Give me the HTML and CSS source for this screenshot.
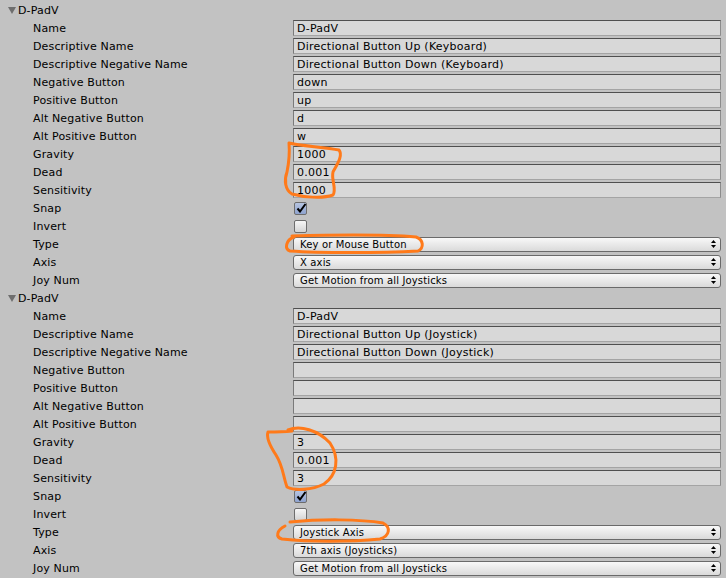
FILE: index.html
```html
<!DOCTYPE html>
<html>
<head>
<meta charset="utf-8">
<link rel="stylesheet" href="styles.css">
</head>
<body>
<div class="panel">
  <div class="header"><svg class="tri" width="8" height="7" viewBox="0 0 8 7"><polygon points="0,0 8,0 4,7" fill="#6e6e6e"/></svg><span>D-PadV</span></div>
  <div class="row"><span class="label">Name</span><div class="field">D-PadV</div></div>
  <div class="row"><span class="label">Descriptive Name</span><div class="field">Directional Button Up (Keyboard)</div></div>
  <div class="row"><span class="label">Descriptive Negative Name</span><div class="field">Directional Button Down (Keyboard)</div></div>
  <div class="row"><span class="label">Negative Button</span><div class="field">down</div></div>
  <div class="row"><span class="label">Positive Button</span><div class="field">up</div></div>
  <div class="row"><span class="label">Alt Negative Button</span><div class="field">d</div></div>
  <div class="row"><span class="label">Alt Positive Button</span><div class="field">w</div></div>
  <div class="row"><span class="label">Gravity</span><div class="field">1000</div></div>
  <div class="row"><span class="label">Dead</span><div class="field">0.001</div></div>
  <div class="row"><span class="label">Sensitivity</span><div class="field">1000</div></div>
  <div class="row"><span class="label">Snap</span><div class="check on"><svg width="11" height="10" viewBox="0 0 11 10"><path d="M1.5 5.5 L4 8.5 L9.5 1" stroke="#000" stroke-width="2" fill="none"/></svg></div></div>
  <div class="row"><span class="label">Invert</span><div class="check"></div></div>
  <div class="row"><span class="label">Type</span><div class="popup"><span>Key or Mouse Button</span><svg class="arr" width="5" height="8" viewBox="0 0 5 8"><polygon points="2.5,0 5,3 0,3" fill="#000"/><polygon points="0,5 5,5 2.5,8" fill="#000"/></svg></div></div>
  <div class="row"><span class="label">Axis</span><div class="popup"><span>X axis</span><svg class="arr" width="5" height="8" viewBox="0 0 5 8"><polygon points="2.5,0 5,3 0,3" fill="#000"/><polygon points="0,5 5,5 2.5,8" fill="#000"/></svg></div></div>
  <div class="row"><span class="label">Joy Num</span><div class="popup"><span>Get Motion from all Joysticks</span><svg class="arr" width="5" height="8" viewBox="0 0 5 8"><polygon points="2.5,0 5,3 0,3" fill="#000"/><polygon points="0,5 5,5 2.5,8" fill="#000"/></svg></div></div>

  <div class="header"><svg class="tri" width="8" height="7" viewBox="0 0 8 7"><polygon points="0,0 8,0 4,7" fill="#6e6e6e"/></svg><span>D-PadV</span></div>
  <div class="row"><span class="label">Name</span><div class="field">D-PadV</div></div>
  <div class="row"><span class="label">Descriptive Name</span><div class="field">Directional Button Up (Joystick)</div></div>
  <div class="row"><span class="label">Descriptive Negative Name</span><div class="field">Directional Button Down (Joystick)</div></div>
  <div class="row"><span class="label">Negative Button</span><div class="field"></div></div>
  <div class="row"><span class="label">Positive Button</span><div class="field"></div></div>
  <div class="row"><span class="label">Alt Negative Button</span><div class="field"></div></div>
  <div class="row"><span class="label">Alt Positive Button</span><div class="field"></div></div>
  <div class="row"><span class="label">Gravity</span><div class="field">3</div></div>
  <div class="row"><span class="label">Dead</span><div class="field">0.001</div></div>
  <div class="row"><span class="label">Sensitivity</span><div class="field">3</div></div>
  <div class="row"><span class="label">Snap</span><div class="check on"><svg width="11" height="10" viewBox="0 0 11 10"><path d="M1.5 5.5 L4 8.5 L9.5 1" stroke="#000" stroke-width="2" fill="none"/></svg></div></div>
  <div class="row"><span class="label">Invert</span><div class="check"></div></div>
  <div class="row"><span class="label">Type</span><div class="popup"><span>Joystick Axis</span><svg class="arr" width="5" height="8" viewBox="0 0 5 8"><polygon points="2.5,0 5,3 0,3" fill="#000"/><polygon points="0,5 5,5 2.5,8" fill="#000"/></svg></div></div>
  <div class="row"><span class="label">Axis</span><div class="popup"><span>7th axis (Joysticks)</span><svg class="arr" width="5" height="8" viewBox="0 0 5 8"><polygon points="2.5,0 5,3 0,3" fill="#000"/><polygon points="0,5 5,5 2.5,8" fill="#000"/></svg></div></div>
  <div class="row"><span class="label">Joy Num</span><div class="popup"><span>Get Motion from all Joysticks</span><svg class="arr" width="5" height="8" viewBox="0 0 5 8"><polygon points="2.5,0 5,3 0,3" fill="#000"/><polygon points="0,5 5,5 2.5,8" fill="#000"/></svg></div></div>

  <svg class="marks" width="726" height="578" viewBox="0 0 726 578">
    <g fill="none" stroke="#ff7a1a" stroke-width="3" stroke-linecap="round" stroke-linejoin="round">
      <path d="M289 143 C300 146 325 147 339 150 C343 155 338 163 333 172 C331 180 337 189 333 195 C322 199 303 197 292 194 C285 190 284 180 287 172 C289 162 290 155 289 143"/>
      <path d="M292 236 C330 235 380 234 416 237 C424 240 424 248 418 251 C380 253 320 253 290 251 C284 249 286 240 294 237"/>
      <path d="M288 430 C300 425 318 430 330 443 C340 458 337 475 324 484 C312 490 295 491 287 487 C283 476 283 466 276 455 C270 446 266 438 268 432 C275 432 282 432 292 431"/>
      <path d="M290 522 C320 519 360 519 383 523 C391 527 390 536 380 539 C350 542 310 542 282 539 C275 537 277 530 285 526"/>
    </g>
  </svg>
</div>
</body>
</html>
```

FILE: styles.css
```css
html, body {
  margin: 0;
  padding: 0;
  background: #c2c2c2;
}
body {
  width: 726px;
  height: 578px;
  overflow: hidden;
  font-family: "DejaVu Sans", Verdana, sans-serif;
  font-size: 11px;
  letter-spacing: 0.15px;
  color: #000;
}
.panel {
  position: relative;
  padding-top: 1px;
}
.header {
  height: 18px;
  display: flex;
  align-items: center;
  padding-left: 8px;
}
.tri {
  margin-right: 2px;
  margin-top: 1px;
}
.row {
  height: 18px;
  display: grid;
  grid-template-columns: 293px 428px;
  align-items: center;
}
.label {
  padding-left: 33px;
  white-space: nowrap;
}
.field {
  height: 16px;
  box-sizing: border-box;
  background: #d8d8d8;
  border-top: 1px solid #4f4f4f;
  border-left: 1px solid #7a7a7a;
  border-right: 1px solid #8c8c8c;
  border-bottom: 1px solid #a4a4a4;
  padding-left: 3px;
  line-height: 15px;
  letter-spacing: 0.25px;
  white-space: nowrap;
  overflow: hidden;
}
.check {
  width: 13px;
  height: 13px;
  box-sizing: border-box;
  margin-left: 1px;
  border: 1px solid #6d6d6d;
  border-radius: 2px;
  background: linear-gradient(#f6f6f6, #d4d4d4);
  position: relative;
}
.check.on {
  background: linear-gradient(#b6c4e0, #8ea3cf);
}
.check svg {
  position: absolute;
  left: 1px;
  top: 0px;
}
.popup {
  height: 15px;
  box-sizing: border-box;
  border: 1px solid #6a6a6a;
  border-radius: 3px;
  background: linear-gradient(#f8f8f8, #dadada);
  display: flex;
  align-items: center;
  justify-content: space-between;
  padding: 0 4px 0 6px;
  font-size: 10px;
  white-space: nowrap;
}
.popup span {
  line-height: 13px;
}
.arr {
  flex: none;
}
.marks {
  position: absolute;
  left: 0;
  top: 0;
  pointer-events: none;
}
```
